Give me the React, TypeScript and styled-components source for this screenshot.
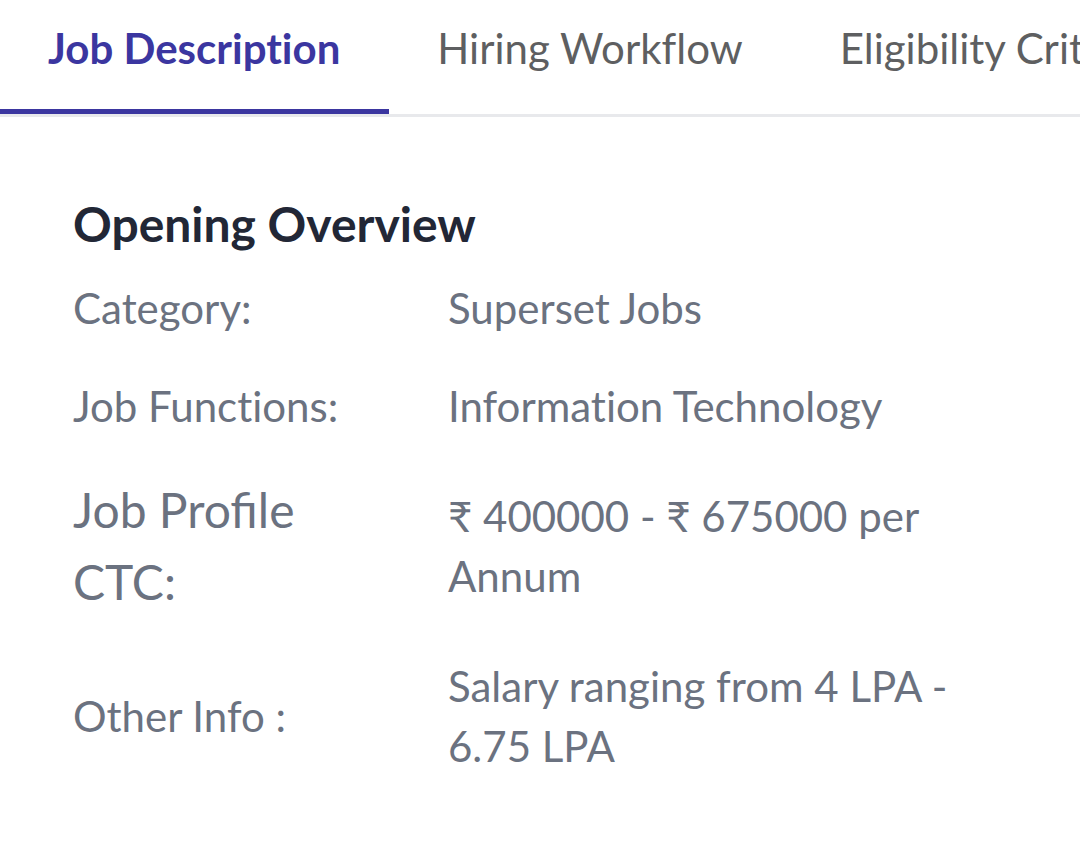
import React from "react";
import styled, { createGlobalStyle } from "styled-components";

const Global = createGlobalStyle`
  html, body { margin: 0; padding: 0; background: #ffffff; }
  body { font-family: Lato, "Noto Sans", sans-serif; -webkit-font-smoothing: antialiased; }
`;

const Page = styled.div`
  width: 1080px;
  height: 843px;
  overflow: hidden;
  background: #ffffff;
`;

const TabBar = styled.div`
  display: flex;
  border-bottom: 3px solid #e8e9ec;
  white-space: nowrap;
  overflow: hidden;
`;

const Tab = styled.div<{ $active?: boolean }>`
  flex: none;
  padding: 23px 49px 41px 48px;
  font-size: 42px;
  line-height: 50px;
  font-variant-ligatures: none;
  font-weight: ${(p) => (p.$active ? 700 : 400)};
  color: ${(p) => (p.$active ? "#3b36a0" : "#5e5f61")};
  box-shadow: ${(p) => (p.$active ? "inset 0 -5px 0 #3b36a0" : "none")};
`;

const Content = styled.div`
  padding: 77px 73px 0 73px;
  display: flex;
  flex-direction: column;
`;

const Heading = styled.h2`
  margin: 0 0 24px 0;
  font-size: 48px;
  line-height: 60px;
  font-weight: 700;
  color: #222736;
`;

const Row = styled.div`
  display: flex;
  align-items: center;
  gap: 65px;
  margin-bottom: 38px;
`;

const Label = styled.div<{ $big?: boolean }>`
  flex: none;
  width: 310px;
  font-size: ${(p) => (p.$big ? "48px" : "42px")};
  line-height: ${(p) => (p.$big ? "72px" : "60px")};
  font-variant-ligatures: ${(p) => (p.$big ? "common-ligatures" : "none")};
  color: #6b7280;
`;

const Value = styled.div`
  flex: none;
  width: 520px;
  font-size: 42px;
  line-height: 60px;
  font-variant-ligatures: none;
  color: #6b7280;
`;

const rows: { label: string; value: string; big?: boolean }[] = [
  { label: "Category:", value: "Superset Jobs" },
  { label: "Job Functions:", value: "Information Technology" },
  { label: "Job Profile CTC:", value: "₹ 400000 - ₹ 675000 per Annum", big: true },
  { label: "Other Info :", value: "Salary ranging from 4 LPA - 6.75 LPA" },
];

export default function App() {
  return (
    <Page>
      <Global />
      <TabBar>
        <Tab $active>Job Description</Tab>
        <Tab>Hiring Workflow</Tab>
        <Tab>Eligibility Criteria</Tab>
      </TabBar>
      <Content>
        <Heading>Opening Overview</Heading>
        {rows.map((r) => (
          <Row key={r.label}>
            <Label $big={r.big}>{r.label}</Label>
            <Value>{r.value}</Value>
          </Row>
        ))}
      </Content>
    </Page>
  );
}
